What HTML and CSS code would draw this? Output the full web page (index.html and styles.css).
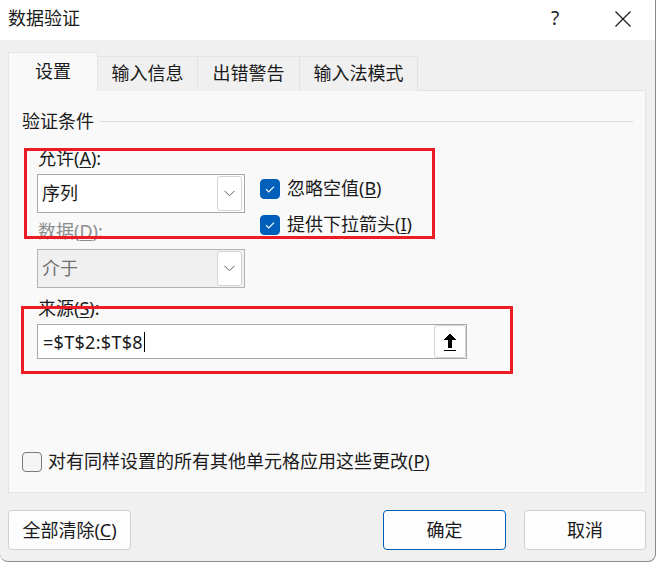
FILE: index.html
```html
<!DOCTYPE html>
<html lang="zh-CN">
<head>
<meta charset="utf-8">
<title>数据验证</title>
<link rel="stylesheet" href="styles.css">
</head>
<body>
<div class="window">
  <div class="titlebar">
    <span class="title">数据验证</span>
    <div class="title-btns">
      <span class="help">?</span>
      <span class="close">
        <svg width="16" height="16" viewBox="0 0 16 16"><path d="M0.5 0.5 L15.5 15.5 M15.5 0.5 L0.5 15.5" stroke="#1a1a1a" stroke-width="1.2" fill="none"/></svg>
      </span>
    </div>
  </div>
  <div class="body">
    <div class="tabs">
      <div class="tab active">设置</div>
      <div class="tab t2">输入信息</div>
      <div class="tab t3">出错警告</div>
      <div class="tab t4">输入法模式</div>
    </div>
    <div class="panel">
      <div class="group-head"><span class="group-title">验证条件</span><span class="rule"></span></div>
      <div class="cond">
        <div class="left">
          <div class="label">允许(<u>A</u>):</div>
          <div class="combo">
            <span class="combo-text">序列</span>
            <span class="drop"><svg width="11" height="7" viewBox="0 0 11 7"><path d="M0.5 0.8 L5.5 5.8 L10.5 0.8" stroke="#5a5a5a" stroke-width="1" fill="none"/></svg></span>
          </div>
          <div class="label disabled gap6">数据(<u>D</u>):</div>
          <div class="combo combo-disabled gap6">
            <span class="combo-text">介于</span>
            <span class="drop"><svg width="11" height="7" viewBox="0 0 11 7"><path d="M0.5 0.8 L5.5 5.8 L10.5 0.8" stroke="#5a5a5a" stroke-width="1" fill="none"/></svg></span>
          </div>
        </div>
        <div class="right">
          <div class="check">
            <span class="box checked"><svg width="20" height="20" viewBox="0 0 20 20"><path d="M6 10.2 L8.7 12.9 L14 7.6" stroke="#fff" stroke-width="1.2" fill="none"/></svg></span>
            <span class="check-text">忽略空值(<u>B</u>)</span>
          </div>
          <div class="check">
            <span class="box checked"><svg width="20" height="20" viewBox="0 0 20 20"><path d="M6 10.2 L8.7 12.9 L14 7.6" stroke="#fff" stroke-width="1.2" fill="none"/></svg></span>
            <span class="check-text">提供下拉箭头(<u>I</u>)</span>
          </div>
        </div>
      </div>
      <div class="label src">来源(<u>S</u>):</div>
      <div class="input">
        <span class="input-text">=$T$2:$T$8</span><span class="caret"></span>
        <span class="ref-btn">
          <svg width="14" height="20" viewBox="0 0 14 20" shape-rendering="crispEdges"><path d="M7 1 L13 8 L9 8 L9 16 L5 16 L5 8 L1 8 Z" fill="#000"/><rect x="1" y="18" width="12" height="1" fill="#000"/></svg>
        </span>
      </div>
      <div class="check bottom">
        <span class="box"></span>
        <span class="check-text">对有同样设置的所有其他单元格应用这些更改(<u>P</u>)</span>
      </div>
      <div class="hl hl1"></div>
      <div class="hl hl2"></div>
    </div>
    <div class="buttons">
      <button class="btn">全部清除(<u>C</u>)</button>
      <button class="btn primary">确定</button>
      <button class="btn cancel">取消</button>
    </div>
  </div>
</div>
</body>
</html>
```

FILE: styles.css
```css
* { box-sizing: border-box; }
html, body { margin: 0; padding: 0; }
body {
  width: 658px;
  height: 565px;
  overflow: hidden;
  background: #ffffff;
  font-family: "Noto Sans", "Noto Sans CJK SC", sans-serif;
  font-size: 18px;
  color: #1a1a1a;
}
u { text-decoration: underline; text-underline-offset: 2px; text-decoration-thickness: 1px; }

.window {
  width: 656px;
  height: 562px;
  background: #f0f0f0;
  border-bottom: 1px solid #8a8a8a;
  border-right: 1px solid #8a8a8a;
  border-bottom-right-radius: 8px;
  border-bottom-left-radius: 8px;
  overflow: hidden;
}

.titlebar {
  height: 40px;
  background: #ffffff;
  display: flex;
  align-items: center;
  justify-content: space-between;
  padding: 0 0 4px 8px;
}
.title { line-height: 24px; }
.title-btns { display: flex; align-items: center; }
.help { width: 20px; text-align: center; line-height: 24px; margin-right: 50px; font-size: 19px; }
.close { width: 16px; height: 16px; display: flex; margin-right: 24px; margin-top: 2px; }

.body { display: flex; flex-direction: column; }

.tabs {
  display: flex;
  align-items: flex-end;
  margin-top: 12px;
  padding-left: 8px;
  position: relative;
  z-index: 2;
  height: 39px;
  margin-bottom: -1px;
}
.tab {
  height: 35px;
  width: 100px;
  border: 1px solid #e3e3e3;
  border-bottom: none;
  border-left: none;
  display: flex;
  align-items: center;
  justify-content: center;
  line-height: 24px;
  background: #f0f0f0;
  padding-bottom: 2px;
}
.tab.active {
  width: 90px;
  height: 39px;
  background: #f9f9f9;
  border-left: 1px solid #e3e3e3;
  padding-bottom: 3px;
}
.tab.t3 { width: 102px; }
.tab.t4 { width: 118px; }

.panel {
  position: relative;
  margin-left: 8px;
  width: 638px;
  height: 403px;
  background: #f9f9f9;
  border: 1px solid #e3e3e3;
  padding: 20px 12px 18px 13px;
  display: flex;
  flex-direction: column;
}

.group-head { display: flex; align-items: center; height: 20px; gap: 6px; }
.group-title { line-height: 20px; }
.rule { flex: 1; height: 1px; background: #dcdcdc; margin-top: 1px; }

.cond { display: flex; margin-top: 15px; padding-left: 15px; }
.left { width: 208px; display: flex; flex-direction: column; }
.label { height: 24px; line-height: 24px; padding-left: 1px; white-space: nowrap; }
.label.disabled { color: #8d8d8d; }
.gap6 { margin-top: 6px; }

.combo {
  margin-top: 4px;
  height: 39px;
  border: 1px solid #a8a8a8;
  background: #ffffff;
  display: flex;
  align-items: center;
  padding: 1px 2px 2px 4px;
}
.combo.gap6 { margin-top: 6px; }
.combo-disabled { background: #f0f0f0; border-color: #b4b4b4; color: #707070; }
.combo-text { flex: 1; line-height: 24px; }
.drop {
  width: 25px;
  height: 35px;
  background: #ffffff;
  border: 1px solid #d4d4d4;
  border-radius: 3px;
  display: flex;
  align-items: center;
  justify-content: center;
}

.right { margin-left: 15px; padding-top: 30px; display: flex; flex-direction: column; gap: 11px; }
.check { display: flex; align-items: center; height: 25px; gap: 7px; white-space: nowrap; }
.check-text { line-height: 25px; }
.box {
  width: 20px;
  height: 20px;
  border-radius: 4px;
  border: 1px solid #7a7a7a;
  background: #f5f5f5;
  display: flex;
  flex-shrink: 0;
}
.box.checked { background: #005fb8; border-color: #005fb8; }
.box svg { margin: -1px; }

.src { margin-top: 8px; padding-left: 16px; }

.input {
  margin-top: 4px;
  margin-left: 15px;
  width: 430px;
  height: 35px;
  border: 1px solid #a8a8a8;
  background: #ffffff;
  display: flex;
  align-items: center;
  padding-left: 5px;
}
.input-text { line-height: 24px; letter-spacing: 0.3px; }
.caret { width: 1px; height: 20px; background: #000; margin-left: 1px; }
.ref-btn {
  margin-left: auto;
  width: 32px;
  height: 33px;
  border: 1px solid #d4d4d4;
  border-radius: 3px;
  background: #fdfdfd;
  display: flex;
  align-items: center;
  justify-content: center;
}

.check.bottom { margin-top: auto; gap: 6px; }

.hl { position: absolute; border: 3px solid #ed1c24; pointer-events: none; }
.hl1 { left: 15px; top: 57px; width: 411px; height: 91px; }
.hl2 { left: 12px; top: 215px; width: 492px; height: 68px; }

.buttons { display: flex; margin-top: 17px; padding-left: 8px; }
.btn {
  font-family: inherit;
  font-size: 18px;
  color: #1a1a1a;
  height: 40px;
  width: 123px;
  background: #fdfdfd;
  border: 1px solid #d0d0d0;
  border-radius: 4px;
  line-height: 24px;
  padding: 0;
}
.btn.primary { margin-left: auto; border-color: #005fb8; }
.btn.cancel { width: 122px; margin-left: 18px; margin-right: 9px; }
```
